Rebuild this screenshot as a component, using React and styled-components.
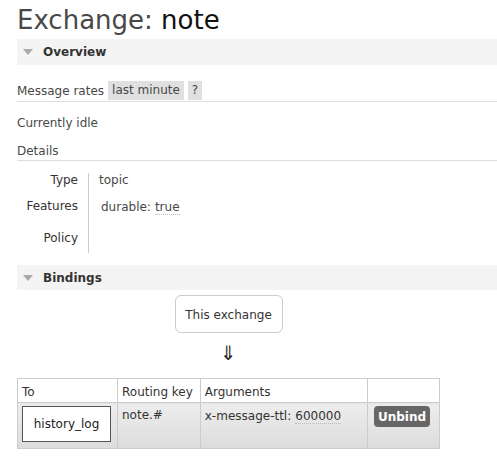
import React from "react";
import styled, { createGlobalStyle } from "styled-components";

const GlobalStyle = createGlobalStyle`
  html, body {
    margin: 0;
    padding: 0;
    background: #fff;
  }
  body {
    font-family: "DejaVu Sans", Verdana, sans-serif;
    font-size: 12px;
    color: #484848;
  }
`;

const Page = styled.div`
  padding: 0 0 0 17px;
`;

const Title = styled.h1`
  margin: 0;
  height: 39px;
  line-height: 40px;
  font-size: 26px;
  font-weight: normal;
  color: #484848;
  white-space: nowrap;

  b {
    font-weight: normal;
    color: #111;
  }
`;

const SectionBar = styled.div`
  display: flex;
  align-items: center;
  gap: 10px;
  height: ${(p) => p.$h || 26}px;
  margin-top: ${(p) => p.$mt || 0}px;
  padding-left: 6px;
  background: #f4f4f4;
  font-weight: bold;
  color: #333;
`;

const Caret = styled.span`
  width: 0;
  height: 0;
  border-left: 5px solid transparent;
  border-right: 5px solid transparent;
  border-top: 6px solid #aaa;
`;

const RatesRow = styled.div`
  display: flex;
  align-items: center;
  gap: 4px;
  margin-top: 16px;
  height: 20px;
  border-bottom: 1px solid #ddd;
`;

const Pill = styled.span`
  background: #e0e0e0;
  padding: 0 4px;
  line-height: 19px;
  align-self: flex-start;
`;

const Line = styled.div`
  margin-top: ${(p) => p.$mt}px;
  line-height: ${(p) => p.$lh}px;
  border-bottom: ${(p) => (p.$rule ? "1px solid #ddd" : "none")};
`;

const Facts = styled.div`
  display: grid;
  grid-template-columns: 72px auto;
  grid-template-rows: 26px 32px 22px;
  margin-top: 12px;
  line-height: 14px;
`;

const FactLabel = styled.div`
  text-align: right;
  padding-right: 10px;
  border-right: 1px solid #ccc;
  color: #333;
`;

const FactValue = styled.div`
  padding-left: ${(p) => p.$pl || 10}px;
`;

const Abbr = styled.span`
  display: inline-block;
  margin-left: 4px;
  padding-top: 2px;
  line-height: 13px;
  border-bottom: 1px dotted #bbb;
`;

const Diagram = styled.div`
  width: 423px;
  display: flex;
  flex-direction: column;
  align-items: center;
`;

const ExchangeBox = styled.div`
  margin-top: 5px;
  width: 106px;
  height: 34px;
  padding-top: 2px;
  border: 1px solid #ccc;
  border-radius: 6px;
  display: flex;
  align-items: center;
  justify-content: center;
  color: #333;
`;

const Arrow = styled.div`
  height: 45px;
  line-height: 40px;
  font-size: 20px;
  color: #222;
`;

const Table = styled.table`
  width: 423px;
  border-collapse: collapse;
  border: 1px solid #ccc;
  font-size: 12px;
  color: #333;

  th,
  td {
    border: 1px solid #ccc;
    text-align: left;
    padding: 0 4px;
  }
  th {
    height: 21px;
    padding-top: 2px;
    font-weight: normal;
    background: #fff;
  }
  td {
    height: 40px;
    vertical-align: top;
    padding-top: 5px;
    background: linear-gradient(#ededed, #dcdcdc);
  }
`;

const Col = styled.col`
  width: ${(p) => p.$w}px;
`;

const QueueBox = styled.div`
  margin-top: -2px;
  width: 87px;
  height: 34px;
  border: 1px solid #555;
  background: #fff;
  display: flex;
  align-items: center;
  justify-content: center;
  color: #222;
`;

const Unbind = styled.button`
  margin: -2px 0 0 2px;
  width: 56px;
  height: 21px;
  border: none;
  border-radius: 4px;
  background: #666;
  color: #fff;
  font-family: inherit;
  font-size: 12px;
  font-weight: bold;
  padding: 0;
`;

export default function App() {
  return (
    <>
      <GlobalStyle />
      <Page>
        <Title>
          Exchange: <b>note</b>
        </Title>
        <SectionBar>
          <Caret />
          Overview
        </SectionBar>
        <RatesRow>
          Message rates
          <Pill>last minute</Pill>
          <Pill>?</Pill>
        </RatesRow>
        <Line $mt={11} $lh={20}>
          Currently idle
        </Line>
        <Line $mt={9} $lh={18} $rule>
          Details
        </Line>
        <Facts>
          <FactLabel>Type</FactLabel>
          <FactValue>topic</FactValue>
          <FactLabel>Features</FactLabel>
          <FactValue $pl={12}>
            durable:<Abbr>true</Abbr>
          </FactValue>
          <FactLabel>Policy</FactLabel>
          <FactValue />
        </Facts>
        <SectionBar $mt={12} $h={25}>
          <Caret />
          Bindings
        </SectionBar>
        <Diagram>
          <ExchangeBox>This exchange</ExchangeBox>
          <Arrow>⇓</Arrow>
          <Table>
            <colgroup>
              <Col $w={100} />
              <Col $w={83} />
              <Col $w={168} />
              <Col $w={72} />
            </colgroup>
            <thead>
              <tr>
                <th>To</th>
                <th>Routing key</th>
                <th>Arguments</th>
                <th />
              </tr>
            </thead>
            <tbody>
              <tr>
                <td>
                  <QueueBox>history_log</QueueBox>
                </td>
                <td>note.#</td>
                <td>
                  x-message-ttl:<Abbr>600000</Abbr>
                </td>
                <td>
                  <Unbind>Unbind</Unbind>
                </td>
              </tr>
            </tbody>
          </Table>
        </Diagram>
      </Page>
    </>
  );
}
